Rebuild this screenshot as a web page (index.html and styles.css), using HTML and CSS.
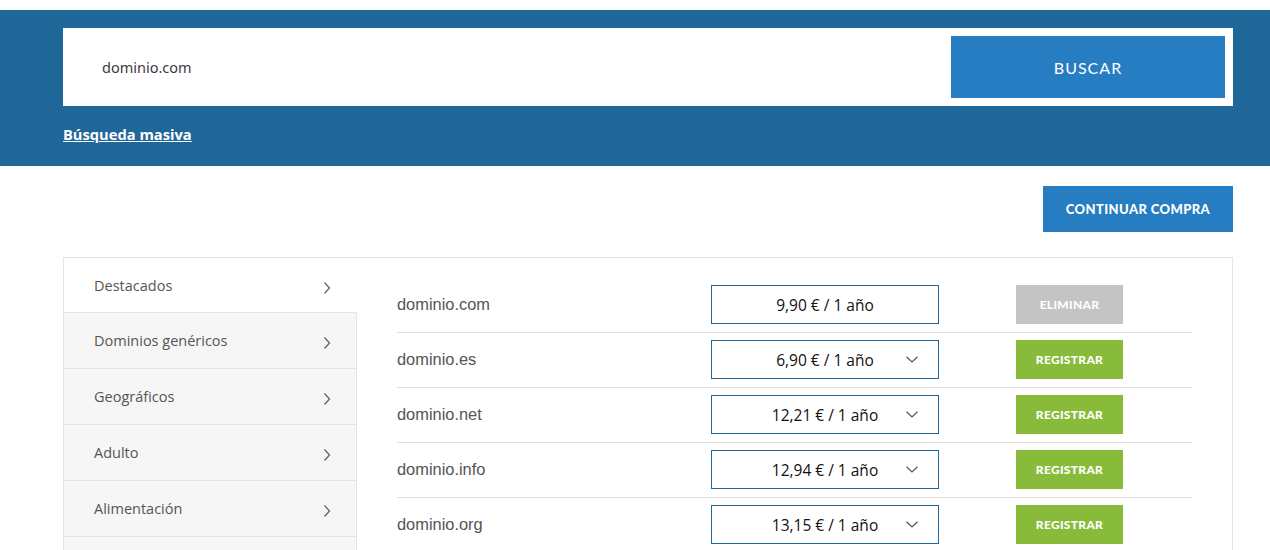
FILE: index.html
```html
<!DOCTYPE html>
<html lang="es">
<head>
<meta charset="utf-8">
<title>Dominios</title>
<link rel="stylesheet" href="styles.css">
</head>
<body>
<header class="hero">
  <div class="wrap">
    <form class="search">
      <span class="search-input">dominio.com</span>
      <button type="button" class="btn-buscar">BUSCAR</button>
    </form>
    <a class="masiva" href="#">Búsqueda masiva</a>
  </div>
</header>
<main class="wrap">
  <div class="actions">
    <button type="button" class="btn-continuar">CONTINUAR COMPRA</button>
  </div>
  <section class="panel">
    <nav class="sidebar">
      <div class="cat active"><span>Destacados</span><svg class="chev" viewBox="0 0 8 14" width="8" height="14"><path d="M1.5 1.5 L6.5 7 L1.5 12.5" fill="none" stroke="#666" stroke-width="1.3"/></svg></div>
      <div class="cat"><span>Dominios genéricos</span><svg class="chev" viewBox="0 0 8 14" width="8" height="14"><path d="M1.5 1.5 L6.5 7 L1.5 12.5" fill="none" stroke="#666" stroke-width="1.3"/></svg></div>
      <div class="cat"><span>Geográficos</span><svg class="chev" viewBox="0 0 8 14" width="8" height="14"><path d="M1.5 1.5 L6.5 7 L1.5 12.5" fill="none" stroke="#666" stroke-width="1.3"/></svg></div>
      <div class="cat"><span>Adulto</span><svg class="chev" viewBox="0 0 8 14" width="8" height="14"><path d="M1.5 1.5 L6.5 7 L1.5 12.5" fill="none" stroke="#666" stroke-width="1.3"/></svg></div>
      <div class="cat"><span>Alimentación</span><svg class="chev" viewBox="0 0 8 14" width="8" height="14"><path d="M1.5 1.5 L6.5 7 L1.5 12.5" fill="none" stroke="#666" stroke-width="1.3"/></svg></div>
      <div class="cat"></div>
    </nav>
    <div class="results">
      <div class="row">
        <span class="dom">dominio.com</span>
        <div class="price">9,90 € / 1 año</div>
        <button type="button" class="btn btn-eliminar">ELIMINAR</button>
      </div>
      <div class="row">
        <span class="dom">dominio.es</span>
        <div class="price">6,90 € / 1 año<svg class="dd" viewBox="0 0 12 7" width="12" height="7"><path d="M0.5 0.8 L6 6 L11.5 0.8" fill="none" stroke="#555" stroke-width="1.2"/></svg></div>
        <button type="button" class="btn btn-registrar">REGISTRAR</button>
      </div>
      <div class="row">
        <span class="dom">dominio.net</span>
        <div class="price">12,21 € / 1 año<svg class="dd" viewBox="0 0 12 7" width="12" height="7"><path d="M0.5 0.8 L6 6 L11.5 0.8" fill="none" stroke="#555" stroke-width="1.2"/></svg></div>
        <button type="button" class="btn btn-registrar">REGISTRAR</button>
      </div>
      <div class="row">
        <span class="dom">dominio.info</span>
        <div class="price">12,94 € / 1 año<svg class="dd" viewBox="0 0 12 7" width="12" height="7"><path d="M0.5 0.8 L6 6 L11.5 0.8" fill="none" stroke="#555" stroke-width="1.2"/></svg></div>
        <button type="button" class="btn btn-registrar">REGISTRAR</button>
      </div>
      <div class="row">
        <span class="dom">dominio.org</span>
        <div class="price">13,15 € / 1 año<svg class="dd" viewBox="0 0 12 7" width="12" height="7"><path d="M0.5 0.8 L6 6 L11.5 0.8" fill="none" stroke="#555" stroke-width="1.2"/></svg></div>
        <button type="button" class="btn btn-registrar">REGISTRAR</button>
      </div>
    </div>
  </section>
</main>
</body>
</html>
```

FILE: styles.css
```css
* { box-sizing: border-box; }
html, body { margin: 0; padding: 0; background: #fff; }
body {
  padding-top: 10px;
  font-family: "Open Sans", "Liberation Sans", sans-serif;
  color: #555;
}
.wrap {
  width: 1170px;
  margin-left: 63px;
}
.hero {
  background: #1f6699;
  height: 156px;
  padding-top: 18px;
}
.search {
  display: flex;
  align-items: center;
  justify-content: space-between;
  background: #fff;
  height: 78px;
  padding: 8px 8px 8px 39px;
  margin: 0;
}
.search-input {
  font-family: "Noto Sans", sans-serif;
  font-size: 14.5px;
  color: #3a3a3a;
  font-weight: 400;
}
.btn-buscar {
  width: 274px;
  height: 62px;
  border: 0;
  background: #267dc1;
  color: #fff;
  font-family: Lato, sans-serif;
  font-size: 16px;
  letter-spacing: 1px;
  padding: 0;
}
.masiva {
  display: inline-block;
  margin-top: 18px;
  color: #fff;
  font-weight: 700;
  font-size: 14.7px;
  text-decoration: underline;
  line-height: 20px;
}
.actions {
  display: flex;
  justify-content: flex-end;
  padding-top: 20px;
}
.btn-continuar {
  width: 190px;
  height: 46px;
  border: 0;
  background: #267dc1;
  color: #fff;
  font-family: Lato, sans-serif;
  font-weight: 900;
  font-size: 13px;
  letter-spacing: 0.4px;
  padding: 0;
}
.panel {
  margin-top: 25px;
  border: 1px solid #e4e4e4;
  display: flex;
  align-items: flex-start;
}
.sidebar {
  width: 293px;
  flex: none;
}
.cat {
  height: 56px;
  display: flex;
  align-items: center;
  justify-content: space-between;
  padding: 0 25px 0 30px;
  background: #f6f6f6;
  border-bottom: 1px solid #e4e4e4;
  border-right: 1px solid #e4e4e4;
  font-size: 14.5px;
  color: #555;
}
.cat.active {
  background: #fff;
  border-right-color: #fff;
  height: 55px;
}
.chev { margin-top: 5px; }
.results {
  flex: 1;
  padding: 20px 40px 0 40px;
}
.row {
  display: grid;
  grid-template-columns: 314px 228px 1fr;
  align-items: center;
  height: 55px;
  border-bottom: 1px solid #dedede;
}
.dom {
  font-family: "Liberation Sans", Arial, sans-serif;
  font-size: 16.4px;
  color: #555;
  margin-top: -1px;
}
.price {
  position: relative;
  height: 39px;
  border: 1px solid #1f6699;
  display: flex;
  align-items: center;
  justify-content: center;
  font-size: 15.5px;
  color: #111;
  margin-top: -1px;
}
.dd {
  position: absolute;
  right: 20px;
  top: 15px;
}
.btn {
  margin-left: 77px;
  width: 107px;
  height: 39px;
  border: 0;
  color: #fff;
  font-family: Lato, sans-serif;
  font-weight: 900;
  font-size: 12px;
  letter-spacing: 0.3px;
  padding: 0;
  margin-top: -1px;
}
.btn-eliminar { background: #c4c4c4; }
.btn-registrar { background: #88bb3a; }
```
